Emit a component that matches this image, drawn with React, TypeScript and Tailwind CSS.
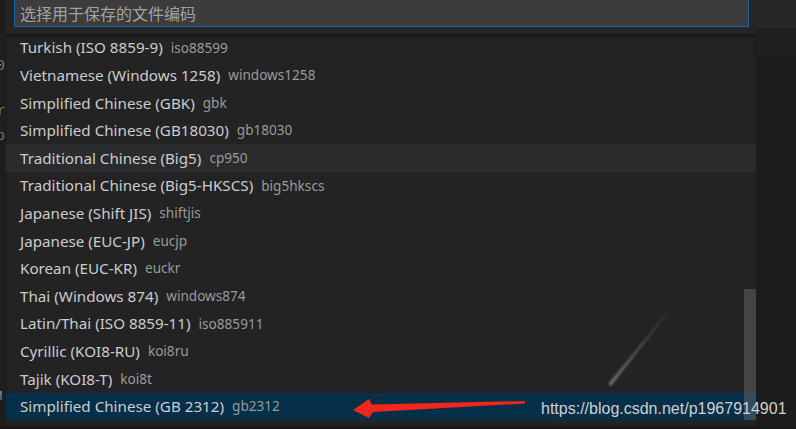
const encodings = [
  { label: "Turkish (ISO 8859-9)", id: "iso88599" },
  { label: "Vietnamese (Windows 1258)", id: "windows1258" },
  { label: "Simplified Chinese (GBK)", id: "gbk" },
  { label: "Simplified Chinese (GB18030)", id: "gb18030" },
  { label: "Traditional Chinese (Big5)", id: "cp950" },
  { label: "Traditional Chinese (Big5-HKSCS)", id: "big5hkscs" },
  { label: "Japanese (Shift JIS)", id: "shiftjis" },
  { label: "Japanese (EUC-JP)", id: "eucjp" },
  { label: "Korean (EUC-KR)", id: "euckr" },
  { label: "Thai (Windows 874)", id: "windows874" },
  { label: "Latin/Thai (ISO 8859-11)", id: "iso885911" },
  { label: "Cyrillic (KOI8-RU)", id: "koi8ru" },
  { label: "Tajik (KOI8-T)", id: "koi8t" },
  { label: "Simplified Chinese (GB 2312)", id: "gb2312" },
];

const hovered = 4;
const selected = 13;

export default function App() {
  return (
    <div className="relative w-[796px] h-[429px] overflow-hidden bg-[#1c1c1c] flex font-['Noto_Sans','Open_Sans',sans-serif]">
      {/* editor glimpse on the left */}
      <div className="relative w-[6px] bg-[#1e1e1e] overflow-hidden text-[15px] font-['Liberation_Mono',monospace]">
        <span className="absolute left-[-4px] top-[56px] text-[#5b8a4e]">0</span>
        <span className="absolute left-[-3px] top-[101px] text-[#5b8a4e]">r</span>
        <span className="absolute left-[-4px] top-[126px] text-[#5b8a4e]">p</span>
        <span className="absolute left-[-5px] top-[388px] text-[#9a9a9a] text-[12px]">M</span>
      </div>

      {/* quick pick */}
      <div className="w-[750px] flex flex-col bg-[#252526]">
        <div className="h-[34px] pl-[8px] pr-[7px]">
          <div className="h-[27px] bg-[#3c3c3c] border-x border-b border-[#1268ac] flex items-center pl-[5px]">
            <span className="text-[16px] text-[#a3a3a3] font-['Noto_Sans_CJK_SC',sans-serif] leading-none">选择用于保存的文件编码</span>
          </div>
        </div>
        <div className="relative flex-1 flex flex-col bg-[#232324] shadow-[inset_0_3px_3px_rgba(0,0,0,0.35)]">
          {encodings.map((e, i) => (
            <div
              key={e.id}
              className={
                "h-[27.6px] flex items-center gap-[8px] pl-[14px] whitespace-nowrap " +
                (i === selected ? "bg-[#062f4a]" : i === hovered ? "bg-[#292b2c]" : "")
              }
            >
              <span className="text-[15.2px] text-[#cccccc]">{e.label}</span>
              <span className="text-[13.6px] text-[#9a9a9a]">{e.id}</span>
            </div>
          ))}
          <div className="absolute right-0 top-[255px] w-[12px] h-[131px] bg-[rgba(121,121,121,0.4)]" />
        </div>
        <div className="h-[1px]" />
      </div>

      {/* editor area to the right */}
      <div className="flex-1 flex flex-col shadow-[inset_8px_0_6px_-4px_rgba(0,0,0,0.5)]">
        <div className="h-[28px] bg-[#262626]" />
        <div className="h-[28px] bg-[#202020]" />
        <div className="flex-1 bg-[#1c1c1c]" />
      </div>

      {/* bottom edge */}
      <div className="absolute left-0 bottom-0 w-[796px] h-[3px] bg-[#181818]" />

      <svg className="absolute left-0 top-0 pointer-events-none" width="796" height="429">
        <defs>
          <linearGradient id="streak" x1="608" y1="383" x2="688" y2="287" gradientUnits="userSpaceOnUse">
            <stop offset="0" stopColor="#ffffff" stopOpacity="0.35" />
            <stop offset="1" stopColor="#ffffff" stopOpacity="0" />
          </linearGradient>
          <filter id="blur">
            <feGaussianBlur stdDeviation="0.8" />
          </filter>
        </defs>
        <path d="M608 384 L688 287 L611 386 Z" fill="url(#streak)" filter="url(#blur)" />
        <path d="M353 410 L369 399 L372 404.5 L525 401 L525 403.5 L373 412 L369 418 Z" fill="#f2261b" />
      </svg>

      {/* watermark */}
      <span className="absolute left-[541px] top-[401px] text-[16px] text-[#d0d0d0] font-['Liberation_Sans',sans-serif] leading-none">
        https://blog.csdn.net/p1967914901
      </span>
    </div>
  );
}
